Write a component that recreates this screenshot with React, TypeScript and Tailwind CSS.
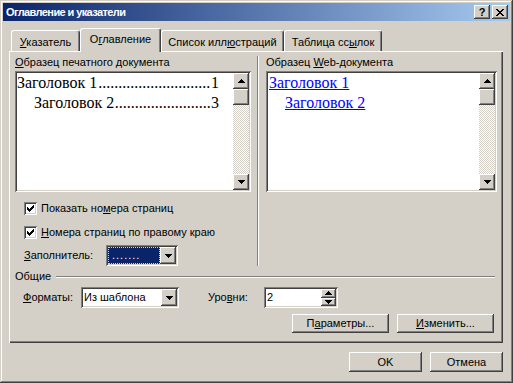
import React from "react";

const raised =
  "bg-[#d4d0c8] shadow-[inset_-1px_-1px_#404040,inset_1px_1px_#ffffff,inset_-2px_-2px_#808080,inset_2px_2px_#d4d0c8]";
const sunken =
  "shadow-[inset_1px_1px_#808080,inset_-1px_-1px_#ffffff,inset_2px_2px_#404040,inset_-2px_-2px_#d4d0c8]";

function Up() {
  return (
    <svg width="7" height="4" viewBox="0 0 7 4" shapeRendering="crispEdges">
      <path d="M3 0h1v1h1v1h1v1h1v1H0V3h1V2h1V1h1z" fill="#000" />
    </svg>
  );
}

function Down() {
  return (
    <svg width="7" height="4" viewBox="0 0 7 4" shapeRendering="crispEdges">
      <path d="M0 0h7v1H6v1H5v1H4v1H3V3H2V2H1V1H0z" fill="#000" />
    </svg>
  );
}

function ScrollBar() {
  return (
    <div className="flex w-[16px] shrink-0 flex-col">
      <div className={`${raised} flex h-[16px] items-center justify-center`}>
        <Up />
      </div>
      <div className={`${raised} h-[16px]`} />
      <div className="flex-1 bg-[image:repeating-conic-gradient(#ffffff_0_25%,#d4d0c8_0_50%)] bg-[length:2px_2px]" />
      <div className={`${raised} flex h-[16px] items-center justify-center`}>
        <Down />
      </div>
    </div>
  );
}

function DropBtn() {
  return (
    <div className={`${raised} flex w-[16px] shrink-0 items-center justify-center`}>
      <Down />
    </div>
  );
}

function CheckBox({ children }: { children: React.ReactNode }) {
  return (
    <div className="flex h-[13px] items-center">
      <div className={`${sunken} flex h-[13px] w-[13px] items-center justify-center bg-white`}>
        <svg width="7" height="7" viewBox="0 0 7 7" shapeRendering="crispEdges">
          <path
            d="M6 0h1v3H6v1H5v1H4v1H3v1H2V6H1V5H0V2h1v1h1v1h1V3h1V2h1V1h1z"
            fill="#000"
          />
        </svg>
      </div>
      <span className="ml-[4px] leading-[13px]">{children}</span>
    </div>
  );
}

function Button({ className, children }: { className: string; children: React.ReactNode }) {
  return (
    <div className={`${raised} flex items-center justify-center ${className}`}>{children}</div>
  );
}

function Tab({
  label,
  active,
  className,
}: {
  label: React.ReactNode;
  active?: boolean;
  className: string;
}) {
  return (
    <div
      className={`relative flex justify-center rounded-t-[3px] border-l border-t border-r border-l-white border-t-white border-r-[#404040] bg-[#d4d0c8] shadow-[inset_-1px_0_#808080] ${
        active ? "z-10 -mb-px h-[24px] pt-[4px]" : "h-[21px] pt-[5px]"
      } ${className}`}
    >
      <span className="leading-[13px]">{label}</span>
    </div>
  );
}

function Leader({ text, num, dots, indent }: { text: string; num: string; dots: number; indent: string }) {
  return (
    <div className={`flex ${indent}`}>
      <span className="shrink-0">{text}</span>
      <span className="min-w-0 flex-1 overflow-hidden whitespace-nowrap text-center">{".".repeat(dots)}</span>
      <span className="shrink-0">{num}</span>
    </div>
  );
}

export default function App() {
  return (
    <div className="h-[383px] w-[513px] bg-[#d4d0c8] p-[3px] font-['Liberation_Sans',sans-serif] text-[11px] text-black shadow-[inset_-1px_-1px_#404040,inset_1px_1px_#d4d0c8,inset_-2px_-2px_#808080,inset_2px_2px_#ffffff]">
      {/* title bar */}
      <div className="flex h-[18px] items-center bg-[linear-gradient(to_right,#0a246a,#a6caf0)] pl-[3px] pr-[2px]">
        <span className="flex-1 text-[11px] font-bold leading-[13px] tracking-[-0.6px] text-white">
          Оглавление и указатели
        </span>
        <div className={`${raised} flex h-[14px] w-[16px] items-center justify-center`}>
          <span className="text-[11px] font-bold leading-[11px]">?</span>
        </div>
        <div className={`${raised} ml-[2px] flex h-[14px] w-[16px] items-center justify-center`}>
          <svg width="8" height="7" viewBox="0 0 8 7" shapeRendering="crispEdges">
            <path
              d="M0 0h2v1h1v1h2V1h1V0h2v1H7v1H6v1H5v1h1v1h1v1h1v1H6V6H5V5H3v1H2v1H0V6h1V5h1V4h1V3H2V2H1V1H0z"
              fill="#000"
            />
          </svg>
        </div>
      </div>

      <div className="ml-[6px] w-[494px]">
        {/* tabs */}
        <div className="mt-[7px] flex h-[23px] items-end pl-[2px]">
          <Tab className="w-[69px]" label={<><u>У</u>казатель</>} />
          <Tab active className="w-[81px]" label={<>О<u>г</u>лавление</>} />
          <Tab className="w-[123px]" label={<>Список илл<u>ю</u>страций</>} />
          <Tab className="w-[98px]" label={<>Таблица сс<u>ы</u>лок</>} />
        </div>

        {/* panel */}
        <div className="flex h-[292px] flex-col px-[6px] pt-[5px] shadow-[inset_1px_1px_#ffffff,inset_-1px_-1px_#404040,inset_-2px_-2px_#808080]">
          <div className="flex">
            {/* left column */}
            <div className="flex w-[236px] flex-col">
              <div className="h-[13px] leading-[13px]">
                <u>О</u>бразец печатного документа
              </div>
              <div className={`${sunken} mt-[2px] flex h-[121px] bg-white p-[2px]`}>
                <div className="min-w-0 flex-1 pr-[14px] font-['Liberation_Serif',serif] text-[16px] leading-[20px]">
                  <Leader text="Заголовок 1" num="1" dots={28} indent="" />
                  <Leader text="Заголовок 2" num="3" dots={24} indent="pl-[17px]" />
                </div>
                <ScrollBar />
              </div>
              <div className="mt-[10px] pl-[9px]">
                <CheckBox>
                  Показать но<u>м</u>ера страниц
                </CheckBox>
              </div>
              <div className="mt-[11px] pl-[9px]">
                <CheckBox>
                  <u>Н</u>омера страниц по правому краю
                </CheckBox>
              </div>
              <div className="mt-[6px] flex h-[21px] items-center pl-[9px]">
                <span className="w-[82px] leading-[13px]">
                  <u>З</u>аполнитель:
                </span>
                <div className={`${sunken} flex h-[21px] w-[72px] bg-white p-[2px]`}>
                  <div className="flex flex-1 items-center bg-[#0a246a] pl-[4px] text-white outline-1 -outline-offset-1 outline-dotted outline-[#d4d0c8]">
                    <span className="text-[11px] leading-[11px] tracking-[1px]">.......</span>
                  </div>
                  <DropBtn />
                </div>
              </div>
            </div>

            {/* divider */}
            <div className="ml-[6px] w-[2px] border-l border-r border-l-[#808080] border-r-white" />

            {/* right column */}
            <div className="ml-[7px] flex w-[231px] flex-col">
              <div className="h-[13px] leading-[13px]">
                Образец <u>W</u>eb-документа
              </div>
              <div className={`${sunken} mt-[2px] flex h-[121px] bg-white p-[2px]`}>
                <div className="min-w-0 flex-1 font-['Liberation_Serif',serif] text-[16px] leading-[20px] text-[#0000ff]">
                  <div className="pl-[1px]">
                    <span className="underline">Заголовок 1</span>
                  </div>
                  <div className="pl-[17px]">
                    <span className="underline">Заголовок 2</span>
                  </div>
                </div>
                <ScrollBar />
              </div>
            </div>
          </div>

          {/* Общие */}
          <div className="mt-[4px] flex h-[13px] items-center">
            <span className="leading-[13px]">Общие</span>
            <div className="ml-[5px] mr-[2px] h-[2px] flex-1 border-t border-b border-t-[#808080] border-b-white" />
          </div>
          <div className="mt-[4px] flex h-[21px] items-center">
            <span className="w-[66px] pl-[8px] leading-[13px]">
              <u>Ф</u>орматы:
            </span>
            <div className={`${sunken} flex h-[21px] w-[98px] bg-white p-[2px]`}>
              <div className="flex flex-1 items-center pl-[1px] leading-[13px]">Из шаблона</div>
              <DropBtn />
            </div>
            <span className="ml-[29px] w-[56px] leading-[13px]">
              Уро<u>в</u>ни:
            </span>
            <div className={`${sunken} flex h-[21px] w-[74px] bg-white p-[2px]`}>
              <div className="flex flex-1 items-center pl-[1px] leading-[13px]">2</div>
              <div className="flex w-[15px] flex-col">
                <div className={`${raised} flex flex-1 items-center justify-center`}>
                  <Up />
                </div>
                <div className={`${raised} flex flex-1 items-center justify-center`}>
                  <Down />
                </div>
              </div>
            </div>
          </div>
          <div className="mt-[6px] flex justify-end gap-[8px] pr-[3px]">
            <Button className="h-[19px] w-[97px]">
              <span>
                П<u>а</u>раметры...
              </span>
            </Button>
            <Button className="h-[19px] w-[97px]">
              <span>
                <u>И</u>зменить...
              </span>
            </Button>
          </div>
        </div>

        {/* dialog buttons */}
        <div className="mt-[9px] flex justify-end gap-[8px]">
          <Button className="h-[20px] w-[73px]">OK</Button>
          <Button className="h-[20px] w-[73px]">Отмена</Button>
        </div>
      </div>
    </div>
  );
}
